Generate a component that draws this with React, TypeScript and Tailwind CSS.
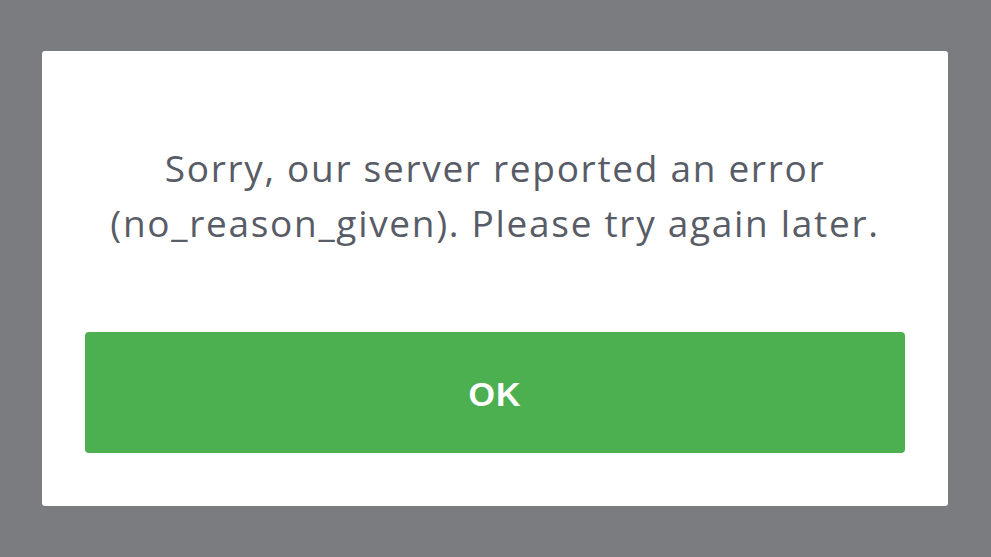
export default function App() {
  return (
    <div className="w-full h-[557px] bg-[#7a7c80] pt-[51px] pl-[42px] pr-[43px]">
      <div className="bg-white rounded-[3px] h-[455px] flex flex-col pt-[89px] px-[43px] pb-[53px]">
        <p
          className="text-center text-[37px] leading-[55px] tracking-[1.7px] text-[#585c66]"
          style={{ fontFamily: "'Open Sans', 'Noto Sans', sans-serif" }}
        >
          Sorry, our server reported an error
          <br />
          (no_reason_given). Please try again later.
        </p>
        <button
          className="mt-[82px] h-[121px] w-full rounded-[4px] bg-[#4caf50] text-white font-bold text-[34px] tracking-[1px] pt-[4px]"
          style={{ fontFamily: "'Liberation Sans', Arial, sans-serif" }}
        >
          OK
        </button>
      </div>
    </div>
  );
}
